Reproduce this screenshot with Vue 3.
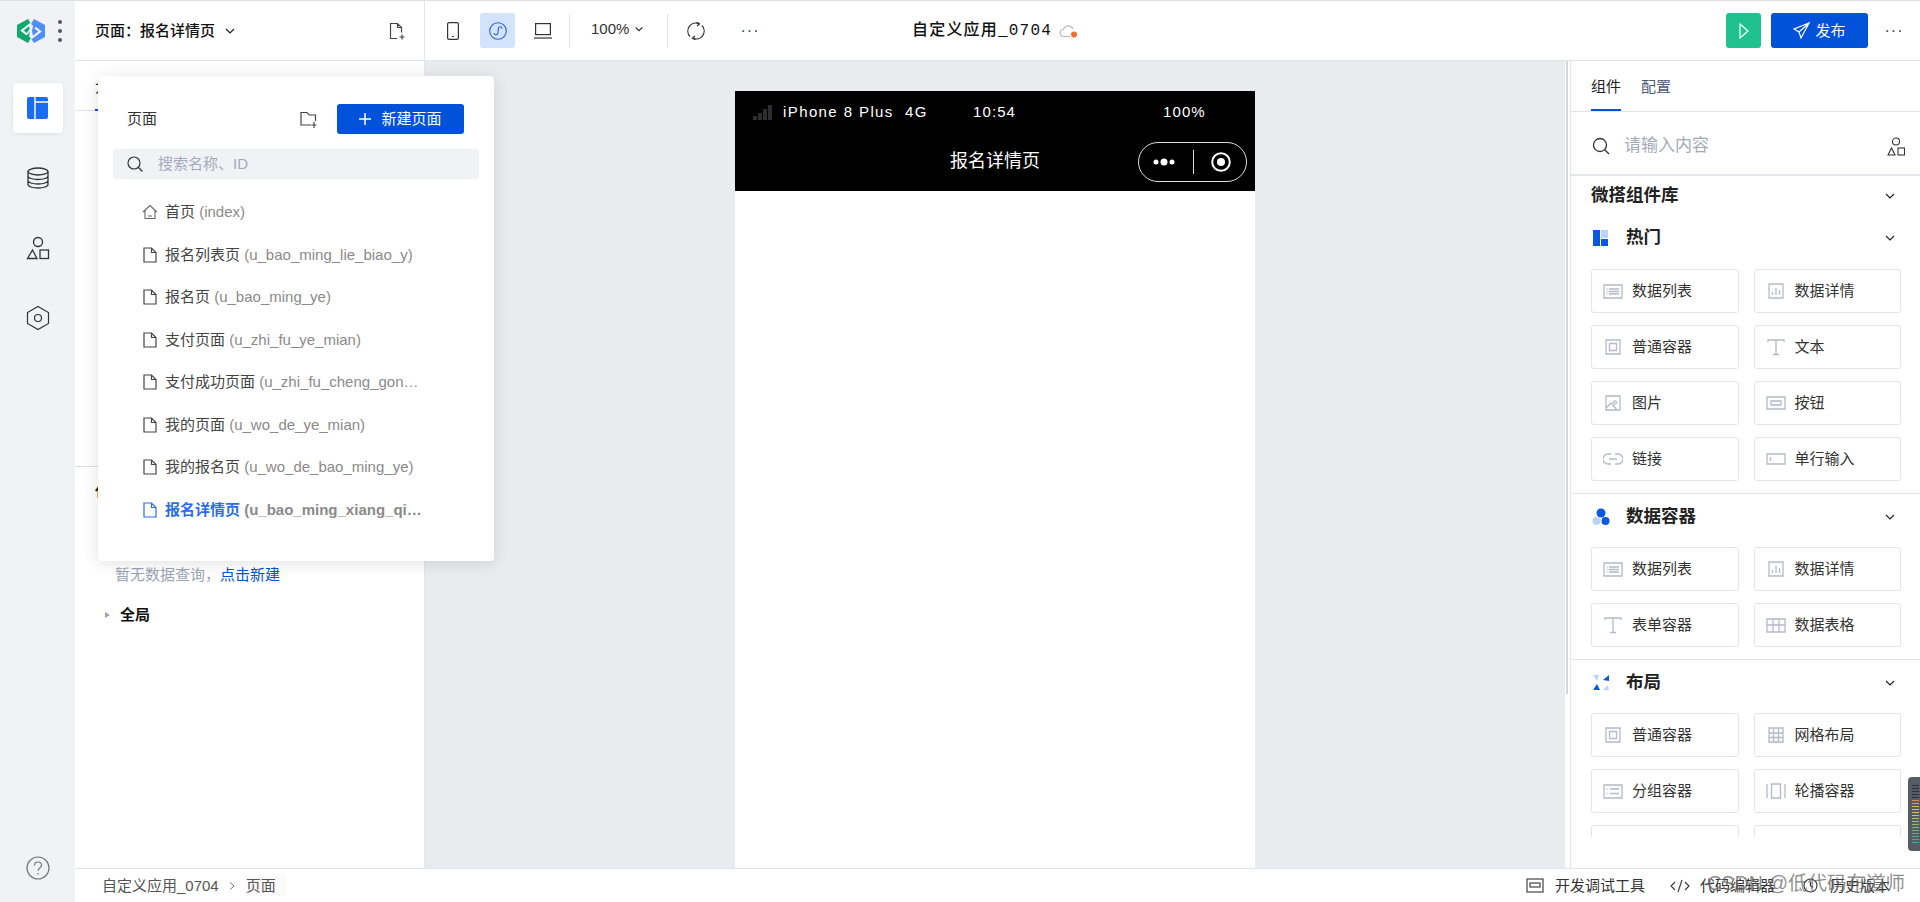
<template>
  <div class="app">
    <aside class="rail">
      <div class="brand">
        <svg class="logo" width="28" height="24" viewBox="0 0 28 24">
          <path fill="#12a86b" d="M11 0 0 6v12l11 6 3-5-2-1.500L13 12 12 6.500l2-2z" />
          <path fill="#4f8ef7" d="M17 24l11-6V6L17 0l-3 5 2 1.500L15 12l1 5.500-2 2z" />
          <path d="M14 4.500 5 11.500l5 4M14 19.500l9-7-5-4" fill="none" stroke="#f0f2f6" stroke-width="2.200" />
          <path d="M10 15l4.500-6" fill="none" stroke="#f0f2f6" stroke-width="1.500" />
        </svg>
        <span class="brand-dots"><i></i><i></i><i></i></span>
      </div>
      <button type="button" class="rail-btn rail-btn--active">
        <svg width="22" height="22" viewBox="0 0 22 22">
          <rect x="0" y="0" width="21" height="22" rx="2" fill="#1a6cf0" />
          <path d="M8 0v22M8 5h13" stroke="#fff" stroke-width="1.400" />
        </svg>
      </button>
      <button type="button" class="rail-btn">
        <svg width="24" height="24" viewBox="0 0 24 24" fill="none" stroke="#333" stroke-width="1.300">
          <ellipse cx="12" cy="5.500" rx="10" ry="3.500" />
          <path d="M2 5.500v13c0 2 4.500 3.500 10 3.500s10-1.500 10-3.500v-13M2 10c0 2 4.500 3.500 10 3.500S22 12 22 10M2 14.500c0 2 4.500 3.500 10 3.500s10-1.500 10-3.500" />
        </svg>
      </button>
      <button type="button" class="rail-btn">
        <svg width="24" height="24" viewBox="0 0 24 24" fill="none" stroke="#333" stroke-width="1.300">
          <circle cx="12" cy="6" r="4.500" />
          <path d="M6.500 14 11 22.500H1.500z" />
          <rect x="14" y="14" width="8.500" height="8.500" />
        </svg>
      </button>
      <button type="button" class="rail-btn">
        <svg width="24" height="26" viewBox="0 0 24 26" fill="none" stroke="#333" stroke-width="1.200">
          <path d="M12 1.500 22.500 7.500v11L12 24.500 1.500 18.500v-11z" />
          <circle cx="12" cy="13" r="3.500" />
        </svg>
      </button>
      <svg class="help" width="24" height="24" viewBox="0 0 24 24" fill="none" stroke="#777" stroke-width="1.200">
        <circle cx="12" cy="12" r="11" />
        <path d="M8.500 9.500c0-2 1.500-3.500 3.500-3.500s3.500 1.500 3.500 3.300c0 2.700-3.500 2.700-3.500 5.700M12 17v1.500" />
      </svg>
    </aside>

    <div class="content">
      <header class="topbar">
        <div class="page-select">
          <span class="page-select__label">页面：报名详情页</span>
          <svg class="chev" width="12" height="12" viewBox="0 0 12 12"><path d="M2 4l4 4 4-4" fill="none" stroke="#222" stroke-width="1.200" /></svg>
          <svg class="page-select__add" width="18" height="18" viewBox="0 0 18 18" fill="none" stroke="#444" stroke-width="1.200">
            <path d="M9 16.500H2.500v-15h7l4 4v5M9.500 1.500v4h4M14 12.500v5M11.500 15h5" />
          </svg>
        </div>
        <div class="tools">
          <button type="button" class="tool">
            <svg width="12" height="18" viewBox="0 0 12 18" fill="none" stroke="#333" stroke-width="1.200">
              <rect x="0.600" y="0.600" width="10.800" height="16.800" rx="1.500" /><path d="M5 14.500h2" />
            </svg>
          </button>
          <button type="button" class="tool tool--active">
            <svg width="18" height="18" viewBox="0 0 18 18" fill="none" stroke="#2a62d8" stroke-width="1.100">
              <circle cx="9" cy="9" r="8.300" />
              <path d="M5 11c0 2 3 2.500 3.800 .5L9.500 6c.5-2 3.500-1.500 3.500 .5" />
            </svg>
          </button>
          <button type="button" class="tool">
            <svg width="18" height="16" viewBox="0 0 18 16" fill="none" stroke="#333" stroke-width="1.200">
              <rect x="1.600" y="0.600" width="14.800" height="11" /><path d="M0 15h18" />
            </svg>
          </button>
          <span class="tool-sep"></span>
          <div class="zoom">
            <span>100%</span>
            <svg width="10" height="10" viewBox="0 0 12 12"><path d="M2 4l4 4 4-4" fill="none" stroke="#222" stroke-width="1.300" /></svg>
          </div>
          <span class="tool-sep"></span>
          <button type="button" class="tool tool--refresh">
            <svg width="18" height="18" viewBox="0 0 18 18" fill="none" stroke="#333" stroke-width="1.200">
              <path d="M12 1.700A8 8 0 0 0 3 14.500M6 16.300A8 8 0 0 0 15 3.500" />
              <path d="M9.500 0 12.500 1.800 10 4M8.500 18l-3-1.800L8 14" />
            </svg>
          </button>
          <span class="dots">···</span>
          <div class="app-title">
            <span>自定义应用_0704</span>
            <svg width="20" height="16" viewBox="0 0 20 16" fill="none">
              <path d="M5 13.500a3.500 3.500 0 0 1-.5-7A5 5 0 0 1 14 6" stroke="#b4bccb" stroke-width="1.200" />
              <path d="M5 13.500h6" stroke="#b4bccb" stroke-width="1.200" />
              <circle cx="15" cy="11.500" r="3" fill="#f0702c" />
            </svg>
          </div>
          <div class="actions">
            <button type="button" class="run">
              <svg width="10" height="16" viewBox="0 0 10 16" fill="none" stroke="#fff" stroke-width="1.200"><path d="M1 1l8 7-8 7z" /></svg>
            </button>
            <button type="button" class="publish">
              <svg width="17" height="17" viewBox="0 0 17 17" fill="none" stroke="#fff" stroke-width="1.200"><path d="M16 1 1 7l5 3 2 6zM6 10l10-9" /></svg>
              <span>发布</span>
            </button>
            <span class="dots dots--end">···</span>
          </div>
        </div>
      </header>

      <main class="main">
        <section class="left">
          <div class="left-tabs"><span class="left-tab">大纲</span></div>
          <div class="left-tree"></div>
          <div class="left-data">
            <div class="left-data__title">代码</div>
            <p class="left-data__empty">暂无数据查询，<a>点击新建</a></p>
            <div class="left-data__global"><i class="tri"></i>全局</div>
          </div>
        </section>

        <section class="stage">
          <div class="phone">
            <div class="phone-head">
              <div class="status">
                <svg width="20" height="15" viewBox="0 0 20 15" fill="#2e2e2e">
                  <rect x="0" y="11" width="4" height="4" /><rect x="5" y="8" width="4" height="7" /><rect x="10" y="4" width="4" height="11" /><rect x="15" y="0" width="4" height="15" />
                </svg>
                <span class="status__device">iPhone 8 Plus&nbsp;&nbsp;4G</span>
                <span class="status__time">10:54</span>
                <span>100%</span>
              </div>
              <div class="nav">
                <span>报名详情页</span>
                <div class="capsule">
                  <svg width="22" height="10" viewBox="0 0 22 10" fill="#fff"><circle cx="3" cy="5" r="2.500" /><circle cx="11" cy="5" r="3.500" /><circle cx="19" cy="5" r="2.500" /></svg>
                  <span class="capsule__sep"></span>
                  <svg width="20" height="20" viewBox="0 0 20 20" fill="none"><circle cx="10" cy="10" r="8.800" stroke="#fff" stroke-width="2" /><circle cx="10" cy="10" r="4" fill="#fff" /></svg>
                </div>
              </div>
            </div>
          </div>
        </section>

        <div class="strip"><span class="strip__thumb"></span></div>

        <section class="right">
          <div class="right-tabs">
            <span class="right-tab right-tab--on">组件</span>
            <span class="right-tab">配置</span>
          </div>
          <div class="right-search">
            <svg width="18" height="18" viewBox="0 0 18 18" fill="none" stroke="#333" stroke-width="1.300"><circle cx="8" cy="8" r="6.500" /><path d="M12.500 12.500 17 17" /></svg>
            <span class="right-search__ph">请输入内容</span>
            <svg class="right-search__shape" width="18" height="19" viewBox="0 0 18 19" fill="none" stroke="#333" stroke-width="1.100"><circle cx="9" cy="4.500" r="3.500" /><path d="M4.500 11 8 18H1z" /><rect x="11" y="11" width="6.500" height="7" /></svg>
          </div>
          <div class="lib">
            <div class="lib-title">
              <span class="lib-title__text">微搭组件库</span>
              <svg width="12" height="12" viewBox="0 0 12 12"><path d="M2 4l4 4 4-4" fill="none" stroke="#222" stroke-width="1.200" /></svg>
            </div>
            <div v-for="(group, gi) in groups" :key="group.title" class="group" :class="{ 'group--first': gi === 0 }">
              <div class="group-head">
                <svg width="18" height="18" viewBox="0 0 18 18">
                  <template v-if="group.logo === 'hot'">
                    <rect x="1" y="1" width="7" height="16" fill="#0a57e0" />
                    <rect x="9" y="1" width="7" height="8" fill="#bcd4fb" />
                    <rect x="9" y="10" width="7" height="7" fill="#0a57e0" />
                  </template>
                  <template v-else-if="group.logo === 'data'">
                    <circle cx="9" cy="5" r="4.500" fill="#0a57e0" />
                    <circle cx="4.500" cy="13" r="4" fill="#bcd4fb" />
                    <circle cx="13.500" cy="13" r="4" fill="#0a57e0" />
                  </template>
                  <template v-else>
                    <path d="M1 1h6l-2 6z" fill="#bcd4fb" />
                    <path d="M11 6l6-5v6z" fill="#0a57e0" />
                    <path d="M1 16l4-6 3 6z" fill="#0a57e0" />
                    <path d="M11 16l5-5 1 5z" fill="#bcd4fb" />
                  </template>
                </svg>
                <span class="group-head__title">{{ group.title }}</span>
                <svg width="12" height="12" viewBox="0 0 12 12"><path d="M2 4l4 4 4-4" fill="none" stroke="#222" stroke-width="1.200" /></svg>
              </div>
              <div class="cards">
                <div v-for="(card, ci) in group.cards" :key="ci" class="card">
                  <svg v-if="card.icon" width="20" height="20" viewBox="0 0 20 20" fill="none" stroke="#b3bac9" stroke-width="1.300">
                    <path :d="icons[card.icon]" />
                  </svg>
                  <span v-if="card.label">{{ card.label }}</span>
                </div>
              </div>
            </div>
          </div>
        </section>
      </main>

      <footer class="footer">
        <div class="crumbs">
          <span>自定义应用_0704</span>
          <svg width="10" height="10" viewBox="0 0 10 10"><path d="M3 1.500 7 5 3 8.500" fill="none" stroke="#777" stroke-width="1" /></svg>
          <span class="crumbs__last">页面</span>
        </div>
        <div class="foot-tools">
          <span class="foot-tool foot-tool--dev">
            <svg width="18" height="15" viewBox="0 0 18 15" fill="none" stroke="#444" stroke-width="1.200"><rect x="1" y="1" width="16" height="13" /><rect x="4" y="5" width="10" height="4" /></svg>
            开发调试工具
          </span>
          <span class="foot-tool foot-tool--code">
            <svg width="20" height="14" viewBox="0 0 20 14" fill="none" stroke="#333" stroke-width="1.100"><path d="M5 3 1 7l4 4M15 3l4 4-4 4M12 1 8 13" /></svg>
            代码编辑器
          </span>
          <span class="foot-tool foot-tool--his">
            <svg width="15" height="15" viewBox="0 0 15 15" fill="none" stroke="#333" stroke-width="1.100"><circle cx="7.500" cy="7.500" r="6.500" /><path d="M7.500 4v4l2.500 1.500" /></svg>
            历史版本
          </span>
        </div>
      </footer>
    </div>

    <div class="pop">
      <div class="pop-head">
        <span class="pop-head__title">页面</span>
        <svg class="pop-head__folder" width="18" height="17" viewBox="0 0 18 17" fill="none" stroke="#444" stroke-width="1.200">
          <path d="M11 14H1V1.500h6l2 2.500h6.500v6M14 11v6M11.500 14h5" />
        </svg>
        <button type="button" class="pop-new">
          <svg width="12" height="12" viewBox="0 0 12 12" stroke="#fff" stroke-width="1.500"><path d="M6 0v12M0 6h12" /></svg>
          新建页面
        </button>
      </div>
      <div class="pop-search">
        <svg width="16" height="16" viewBox="0 0 16 16" fill="none" stroke="#333" stroke-width="1.200"><circle cx="7" cy="7" r="6" /><path d="M11.500 11.500 15.500 15.500" /></svg>
        <span>搜索名称、ID</span>
      </div>
      <ul class="pop-list">
        <li v-for="p in pages" :key="p.name" class="pop-item" :class="{ 'pop-item--active': p.active }">
          <svg v-if="p.home" class="pop-item__home" width="16" height="16" viewBox="0 0 16 16" fill="none" stroke="#666" stroke-width="1.100">
            <path d="M1 8 8 1.500 15 8M3 6.500v8h10v-8M6 12h4" />
          </svg>
          <svg v-else width="14" height="16" viewBox="0 0 14 16" fill="none" stroke="currentColor" stroke-width="1.200">
            <path d="M1 1h7.500L13 5.500V15H1zM8.500 1v4.500H13" />
          </svg>
          <span class="pop-item__text"><span class="pop-item__name">{{ p.name }}</span> <span class="pop-item__id">({{ p.id }})</span></span>
        </li>
      </ul>
    </div>

    <div class="meter">
      <i v-for="(c, i) in meterBars" :key="i" :style="{ background: c }"></i>
    </div>
    <div class="watermark">CSDN @低代码布道师</div>
  </div>
</template>

<script setup>
const icons = {
  list: 'M1 4h18v13H1zM6 8h10M6 10.500h10M6 13h10M3.500 8h1M3.500 10.500h1M3.500 13h1',
  detail: 'M3 3h14v14H3zM6.500 14v-3M10 14V7M13.500 14v-5',
  box: 'M3 3h14v14H3zM6.500 6.500h7v7h-7z',
  text: 'M2 5V3h16v2M10 3v14M7 17.500h6',
  image: 'M3 3h14v14H3zM3 15l5-5 6 7M12 8a1.500 1.500 0 1 0 .1 0',
  button: 'M1 4h18v12H1zM5 8h10v4H5z',
  link: 'M8 5H5a5 5 0 0 0 0 10h3M12 5h3a5 5 0 0 1 0 10h-3M6 10h8',
  input: 'M1 5h18v10H1zM4.500 8v4',
  table: 'M1 4h18v13H1zM1 10h18M7 4v13M13 4v13',
  grid: 'M3 3h14v14H3zM3 8h14M3 12.500h14M7.500 3v14M12.500 3v14',
  group: 'M1 4h18v13H1zM7 8h9M7 12.500h9M3.500 8h1M3.500 12.500h1',
  carousel: 'M5.500 3h9v14h-9zM1 3v14M19 3v14'
}

const groups = [
  {
    title: '热门',
    logo: 'hot',
    cards: [
      { icon: 'list', label: '数据列表' },
      { icon: 'detail', label: '数据详情' },
      { icon: 'box', label: '普通容器' },
      { icon: 'text', label: '文本' },
      { icon: 'image', label: '图片' },
      { icon: 'button', label: '按钮' },
      { icon: 'link', label: '链接' },
      { icon: 'input', label: '单行输入' }
    ]
  },
  {
    title: '数据容器',
    logo: 'data',
    cards: [
      { icon: 'list', label: '数据列表' },
      { icon: 'detail', label: '数据详情' },
      { icon: 'text', label: '表单容器' },
      { icon: 'table', label: '数据表格' }
    ]
  },
  {
    title: '布局',
    logo: 'layout',
    cards: [
      { icon: 'box', label: '普通容器' },
      { icon: 'grid', label: '网格布局' },
      { icon: 'group', label: '分组容器' },
      { icon: 'carousel', label: '轮播容器' },
      {},
      {}
    ]
  }
]

const pages = [
  { name: '首页', id: 'index', home: true },
  { name: '报名列表页', id: 'u_bao_ming_lie_biao_y' },
  { name: '报名页', id: 'u_bao_ming_ye' },
  { name: '支付页面', id: 'u_zhi_fu_ye_mian' },
  { name: '支付成功页面', id: 'u_zhi_fu_cheng_gong_ye_mian' },
  { name: '我的页面', id: 'u_wo_de_ye_mian' },
  { name: '我的报名页', id: 'u_wo_de_bao_ming_ye' },
  { name: '报名详情页', id: 'u_bao_ming_xiang_qing_ye', active: true }
]

const meterBars = [
  '#2f323a', '#2f323a', '#2f323a', '#2f323a', '#2f323a',
  '#d98a4e', '#dd9a4e', '#dcae4f', '#d8bc50', '#d3c653', '#c6c658', '#b4c25e',
  '#a3bd64', '#92b86a', '#82b470', '#72b078', '#62ac82', '#56a98c', '#4ca897', '#46a8a0'
]
</script>

<style>
html,
body {
  margin: 0;
  padding: 0;
  overflow: hidden;
}
</style>

<style scoped>
.app {
  position: relative;
  display: flex;
  width: 1920px;
  height: 902px;
  box-sizing: border-box;
  border-top: 1px solid #e1e1e1;
  overflow: hidden;
  background: #fff;
  color: #222;
  font-family: "Liberation Sans", "Noto Sans CJK SC", sans-serif;
  font-size: 15px;
  line-height: 20px;
}

button {
  padding: 0;
  border: none;
  background: none;
  font: inherit;
  cursor: pointer;
}

.rail {
  display: flex;
  flex-direction: column;
  align-items: center;
  flex: 0 0 75px;
  background: #f0f2f6;
}

.brand {
  display: flex;
  align-items: center;
  align-self: flex-start;
  height: 59px;
  padding-left: 17px;
}

.brand-dots {
  display: flex;
  flex-direction: column;
  gap: 5px;
  margin-left: 13px;
}

.brand-dots i {
  width: 4px;
  height: 4px;
  border-radius: 50%;
  background: #4b5566;
}

.rail-btn {
  display: flex;
  align-items: center;
  justify-content: center;
  width: 50px;
  height: 50px;
  margin-bottom: 20px;
}

.rail-btn--active {
  margin-top: 23px;
  background: #fff;
  border-radius: 4px;
  box-shadow: 0 1px 4px rgba(0, 0, 0, 0.08);
}

.help {
  margin-top: auto;
  margin-bottom: 22px;
}

.content {
  display: flex;
  flex-direction: column;
  flex: 1;
  min-width: 0;
}

.topbar {
  display: flex;
  flex: 0 0 60px;
  box-sizing: border-box;
  border-bottom: 1px solid #e3e5ea;
}

.page-select {
  display: flex;
  align-items: center;
  flex: 0 0 350px;
  box-sizing: border-box;
  padding-left: 20px;
  padding-right: 18px;
  border-right: 1px solid #e3e5ea;
}

.page-select__label {
  font-weight: 500;
  color: #111;
}

.chev {
  margin-left: 9px;
}

.page-select__add {
  margin-left: auto;
}

.tools {
  display: flex;
  align-items: center;
  flex: 1;
  padding-left: 10px;
}

.tool {
  display: flex;
  align-items: center;
  justify-content: center;
  width: 35px;
  height: 35px;
  margin-right: 10px;
  border-radius: 3px;
}

.tool--active {
  background: #d3e3fc;
}

.tool-sep {
  width: 1px;
  height: 34px;
  background: #e3e5ea;
}

.tools .tool-sep:first-of-type {
  margin-left: -1px;
}

.zoom {
  display: flex;
  align-items: center;
  gap: 5px;
  width: 97px;
  padding-left: 21px;
  box-sizing: border-box;
  margin-bottom: 3px;
  color: #333;
}

.tool--refresh {
  margin-left: 10px;
  margin-right: 0;
}

.dots {
  width: 32px;
  margin-left: 21px;
  font-size: 16px;
  letter-spacing: 1px;
  text-align: center;
  color: #444;
}

.dots--end {
  margin-left: 10px;
}

.app-title {
  display: flex;
  align-items: center;
  gap: 7px;
  margin-left: 146px;
  font-family: "Liberation Mono", "Noto Sans CJK SC", monospace;
  font-size: 16px;
  font-weight: 500;
  letter-spacing: 1.200px;
  color: #111;
}

.actions {
  display: flex;
  align-items: center;
  margin-left: auto;
  padding-right: 10px;
}

.run {
  display: flex;
  align-items: center;
  justify-content: center;
  width: 35px;
  height: 35px;
  margin-right: 10px;
  border-radius: 3px;
  background: #1fc28f;
}

.publish {
  display: flex;
  align-items: center;
  justify-content: center;
  gap: 5px;
  width: 97px;
  height: 35px;
  border-radius: 3px;
  background: #0052d9;
  color: #fff;
}

.main {
  display: flex;
  flex: 1;
  min-height: 0;
}

.left {
  display: flex;
  flex-direction: column;
  flex: 0 0 350px;
  box-sizing: border-box;
  border-right: 1px solid #e3e5ea;
}

.left-tabs {
  height: 50px;
  box-sizing: border-box;
  padding-left: 20px;
  border-bottom: 1px solid #e3e5ea;
}

.left-tab {
  display: inline-block;
  height: 50px;
  box-sizing: border-box;
  padding-top: 16px;
  border-bottom: 2px solid #0052d9;
}

.left-tree {
  height: 355px;
  border-bottom: 1px solid #dcdfe8;
}

.left-data {
  padding: 14px 20px;
}

.left-data__title {
  font-weight: 700;
}

.left-data__empty {
  margin: 64px 0 0 20px;
  color: #9aa3b5;
}

.left-data__empty a {
  color: #0052d9;
}

.left-data__global {
  display: flex;
  align-items: center;
  margin-top: 20px;
  padding-left: 10px;
  font-weight: 700;
  color: #111;
}

.tri {
  width: 0;
  height: 0;
  margin-right: 10px;
  border-left: 5px solid #99a3b8;
  border-top: 3.500px solid transparent;
  border-bottom: 3.500px solid transparent;
}

.stage {
  display: flex;
  justify-content: center;
  flex: 1;
  padding-top: 30px;
  background: #eaebef;
}

.phone {
  width: 520px;
  background: #fff;
}

.phone-head {
  background: #000;
  color: #fff;
}

.status {
  display: flex;
  align-items: center;
  height: 40px;
  padding-top: 1px;
  padding-left: 18px;
  letter-spacing: 1.100px;
}

.status svg {
  margin-right: 10px;
}

.status__device {
  width: 190px;
  letter-spacing: 1.400px;
}

.status__time {
  width: 190px;
}

.nav {
  position: relative;
  height: 59px;
  line-height: 59px;
  text-align: center;
  font-size: 18px;
}

.capsule {
  position: absolute;
  top: 10px;
  right: 8px;
  display: flex;
  align-items: center;
  justify-content: space-between;
  width: 109px;
  height: 40px;
  box-sizing: border-box;
  padding: 0 15px 0 14px;
  border: 1px solid #ddd;
  border-radius: 20px;
}

.capsule__sep {
  width: 1px;
  height: 24px;
  background: #ddd;
}

.strip {
  flex: 0 0 5px;
  box-sizing: border-box;
  padding-left: 1px;
}

.strip__thumb {
  display: block;
  width: 2px;
  height: 633px;
  background: #d5d6da;
}

.right {
  display: flex;
  flex-direction: column;
  flex: 0 0 350px;
  box-sizing: border-box;
  border-left: 1px solid #e3e5ea;
}

.right-tabs {
  display: flex;
  gap: 20px;
  height: 51px;
  box-sizing: border-box;
  padding-left: 20px;
  border-bottom: 1px solid #e3e5ea;
}

.right-tab {
  height: 50px;
  box-sizing: border-box;
  padding-top: 16px;
  color: #4c5a74;
}

.right-tab--on {
  border-bottom: 2px solid #0052d9;
  color: #222;
}

.right-search {
  display: flex;
  align-items: center;
  flex: 0 0 64px;
  box-sizing: border-box;
  padding: 6px 15px 0 21px;
  border-bottom: 2px solid #e4e7ed;
}

.right-search__ph {
  margin-left: 14px;
  font-size: 17px;
  color: #a3abbb;
}

.right-search__shape {
  margin-left: auto;
}

.lib {
  flex: 1;
  min-height: 0;
  margin-bottom: 31px;
  overflow: hidden;
}

.lib-title {
  display: flex;
  align-items: center;
  justify-content: space-between;
  height: 39px;
  padding: 0 24px 0 20px;
  font-size: 17.500px;
  font-weight: 700;
  color: #222;
}

.lib-title__text {
  padding-bottom: 2px;
}

.group {
  padding-bottom: 12px;
  border-top: 1px solid #e3e5ea;
}

.group--first {
  border-top: none;
}

.group-head {
  display: flex;
  align-items: center;
  height: 46px;
  margin-bottom: 7px;
  padding: 0 24px 0 21px;
}

.group-head__title {
  flex: 1;
  margin-left: 16px;
  padding-bottom: 2px;
  font-size: 17.500px;
  font-weight: 700;
  color: #222;
}

.group--first .group-head {
  margin-bottom: 8px;
}

.cards {
  display: grid;
  grid-template-columns: repeat(2, 147.500px);
  gap: 12px 15px;
  padding-left: 20px;
}

.card {
  display: flex;
  align-items: center;
  gap: 9px;
  height: 44px;
  box-sizing: border-box;
  padding-left: 11px;
  border: 1px solid #e3e5ee;
  border-radius: 3px;
  color: #333;
}

.footer {
  display: flex;
  align-items: center;
  justify-content: space-between;
  flex: 0 0 34px;
  box-sizing: border-box;
  border-top: 1px solid #e3e5ea;
}

.crumbs {
  display: flex;
  align-items: center;
  padding-left: 27px;
  color: #555;
}

.crumbs svg {
  margin: 0 9px 0 8px;
}

.crumbs__last {
  padding-right: 10px;
  background: #fafafa;
}

.foot-tools {
  display: flex;
  align-items: center;
  color: #333;
}

.foot-tool {
  display: flex;
  align-items: center;
  gap: 11px;
}

.foot-tool--code {
  margin-left: 25px;
  gap: 10px;
}

.foot-tool--his {
  margin-left: 28px;
  gap: 12px;
  margin-right: 30px;
}

.pop {
  position: absolute;
  left: 98px;
  top: 75px;
  width: 396px;
  height: 485px;
  box-sizing: border-box;
  padding: 28px 15px 0;
  border-radius: 4px;
  background: #fff;
  box-shadow: 0 2px 16px rgba(0, 0, 0, 0.12);
}

.pop-head {
  display: flex;
  align-items: center;
  height: 30px;
  padding-left: 14px;
}

.pop-head__title {
  color: #333;
}

.pop-head__folder {
  margin-left: auto;
  margin-right: 19px;
}

.pop-new {
  display: flex;
  align-items: center;
  justify-content: center;
  gap: 10px;
  width: 127px;
  height: 30px;
  margin-right: 15px;
  border-radius: 3px;
  background: #0052d9;
  color: #fff;
}

.pop-search {
  display: flex;
  align-items: center;
  gap: 15px;
  height: 30px;
  margin-top: 15px;
  padding-left: 14px;
  border-radius: 3px;
  background: #f0f2f6;
  color: #a3abbb;
}

.pop-list {
  margin: 12px 0 0;
  padding: 0;
  list-style: none;
}

.pop-item {
  display: flex;
  align-items: center;
  gap: 8px;
  height: 42.500px;
  padding-left: 30px;
  color: #444;
}

.pop-item__home {
  margin: 0 -1px;
}

.pop-item__text {
  width: 258px;
  overflow: hidden;
  white-space: nowrap;
  text-overflow: ellipsis;
  color: #8a8a8a;
}

.pop-item__name {
  color: #444;
}

.pop-item--active {
  color: #2a6ee8;
}

.pop-item--active .pop-item__text {
  font-weight: 700;
}

.pop-item--active .pop-item__name {
  color: #2a6ee8;
}

.meter {
  position: absolute;
  top: 776px;
  right: 0;
  display: flex;
  flex-direction: column;
  gap: 2px;
  width: 12px;
  height: 74px;
  box-sizing: border-box;
  padding: 8px 1px 6px 4px;
  border-radius: 4px 0 0 4px;
  background: #565b66;
}

.meter i {
  display: block;
  height: 1px;
}

.watermark {
  position: absolute;
  right: 15px;
  top: 868px;
  font-size: 19.500px;
  line-height: 28px;
  color: rgba(105, 105, 105, 0.75);
  pointer-events: none;
}
</style>
